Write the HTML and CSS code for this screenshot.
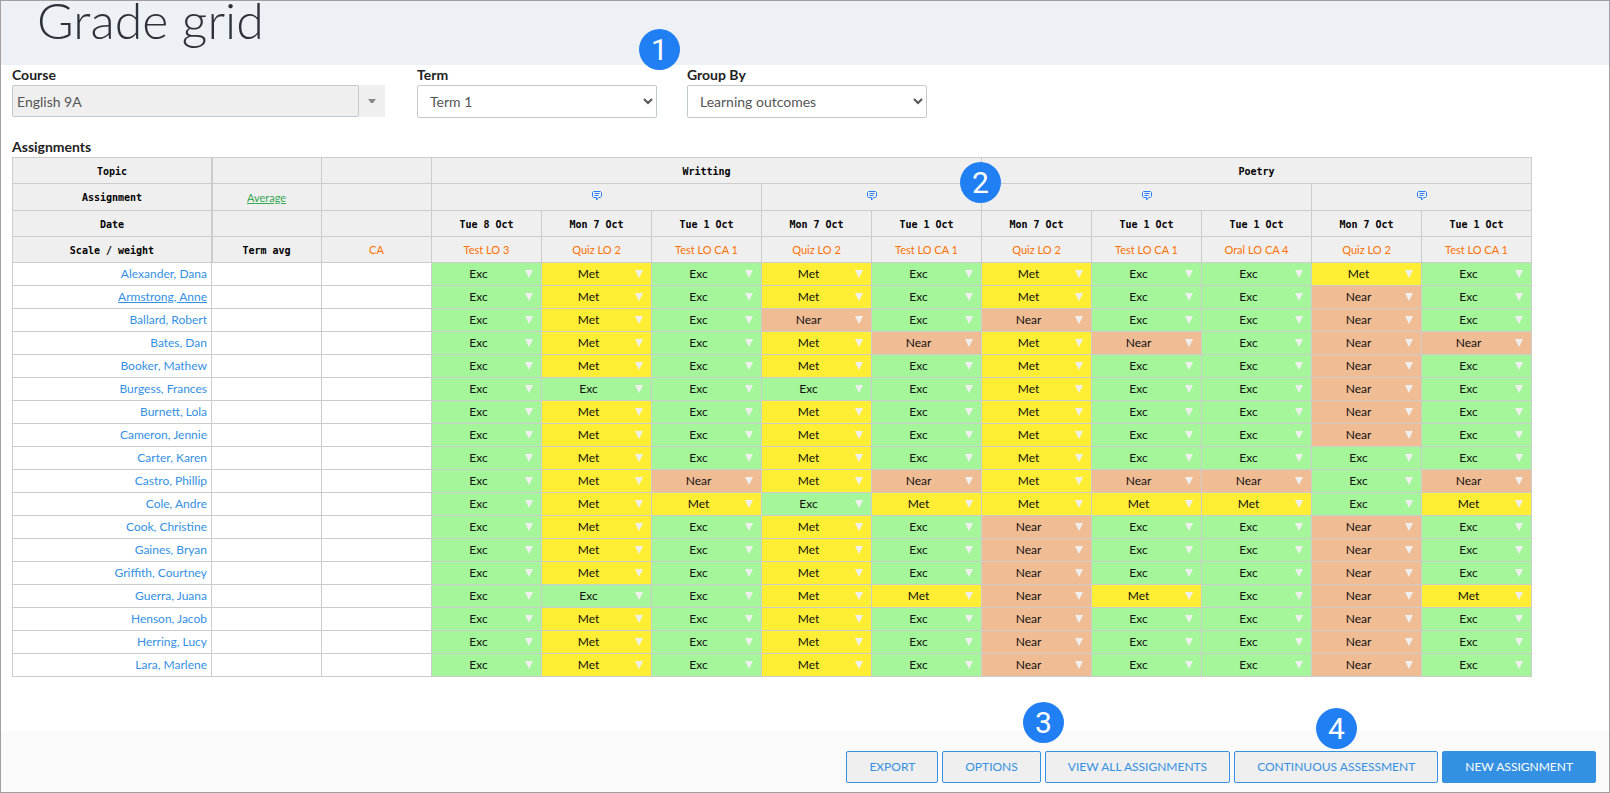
FILE: index.html
```html
<!DOCTYPE html>
<html lang="en">
<head>
<meta charset="utf-8">
<title>Grade grid</title>
<link rel="stylesheet" href="styles.css">
</head>
<body>
<svg class="sprite" aria-hidden="true">
  <symbol id="note" viewBox="0 0 10 10">
    <path d="M1.5 .5h7l1 1v4l-1 1H6.7L4.5 9V6.5h-3l-1-1v-4z" fill="none" stroke="currentColor"/>
    <path d="M2.5 2.5h5M2.5 4.5h4" stroke="currentColor"/>
  </symbol>
</svg>
<header class="page-head"><h1>Grade grid</h1></header>
<main class="content">
  <form class="filters">
    <div class="field field-course">
      <label for="course">Course</label>
      <div class="combo">
        <input id="course" type="text" value="English 9A" readonly>
        <button type="button" aria-label="Choose course"><svg viewBox="0 0 8 5"><path d="M0 0h8L5 4H3z"/></svg></button>
      </div>
    </div>
    <div class="field">
      <label for="term">Term</label>
      <select id="term"><option>Term 1</option><option>Term 2</option></select>
    </div>
    <div class="field">
      <label for="group">Group By</label>
      <select id="group"><option>Learning outcomes</option><option>Topics</option></select>
    </div>
  </form>
  <h2>Assignments</h2>
  <table class="grid">
    <colgroup><col class="col-name"><col span="12"></colgroup>
    <thead>
      <tr><th>Topic</th><th class="edge"></th><th></th><th colspan="5">Writting</th><th colspan="5">Poetry</th></tr>
      <tr class="notes"><th>Assignment</th><th class="edge"><a class="average" href="#average">Average</a></th><th></th>
        <th colspan="3"><a class="note" href="#note" aria-label="Note"><svg><use href="#note"/></svg></a></th>
        <th colspan="2"><a class="note" href="#note" aria-label="Note"><svg><use href="#note"/></svg></a></th>
        <th colspan="3"><a class="note" href="#note" aria-label="Note"><svg><use href="#note"/></svg></a></th>
        <th colspan="2"><a class="note" href="#note" aria-label="Note"><svg><use href="#note"/></svg></a></th></tr>
      <tr><th>Date</th><th class="edge"></th><th></th><th>Tue 8 Oct</th><th>Mon 7 Oct</th><th>Tue 1 Oct</th><th>Mon 7 Oct</th><th>Tue 1 Oct</th><th>Mon 7 Oct</th><th>Tue 1 Oct</th><th>Tue 1 Oct</th><th>Mon 7 Oct</th><th>Tue 1 Oct</th></tr>
      <tr class="scales"><th class="plain">Scale / weight</th><th class="edge plain">Term avg</th><th>CA</th><th>Test LO 3</th><th>Quiz LO 2</th><th>Test LO CA 1</th><th>Quiz LO 2</th><th>Test LO CA 1</th><th>Quiz LO 2</th><th>Test LO CA 1</th><th>Oral LO CA 4</th><th>Quiz LO 2</th><th>Test LO CA 1</th></tr>
    </thead>
    <tbody id="students"></tbody>
  </table>
</main>
<footer class="actions">
  <button type="button">EXPORT</button>
  <button type="button">OPTIONS</button>
  <button type="button">VIEW ALL ASSIGNMENTS</button>
  <button type="button">CONTINUOUS ASSESSMENT</button>
  <button type="button" class="primary">NEW ASSIGNMENT</button>
  <span class="marker marker-3">3</span>
  <span class="marker marker-4">4</span>
</footer>
<span class="marker marker-1">1</span>
<span class="marker marker-2">2</span>
<script src="grid.js"></script>
</body>
</html>
```
FILE: styles.css
```css
* { box-sizing: border-box; }

body {
  margin: 0;
  min-height: 100vh;
  display: flex;
  flex-direction: column;
  position: relative;
  border: 1px solid #a0a0a0;
  background: #fff;
  color: #222;
  font-family: Lato, sans-serif;
  font-size: 14px;
}

.sprite { position: absolute; width: 0; height: 0; }

.page-head {
  height: 64px;
  padding-left: 36px;
  background: #edf1f5;
}

.page-head h1 {
  margin: 0;
  color: #2d3139;
  font-size: 50px;
  font-weight: 300;
  line-height: 38px;
}

.content { flex: 1; padding: 0 77px 54px 11px; }

.filters { display: flex; align-items: flex-start; gap: 30px; margin-bottom: 19px; }
.field { display: flex; flex-direction: column; width: 240px; }
.field-course { width: 373px; margin-right: 2px; }

.field label, .content h2 {
  margin: 0;
  color: #222;
  font-size: 14px;
  font-weight: 700;
  line-height: 20px;
}

.field select, .combo input {
  font: 14px Lato, sans-serif;
  color: #555;
  border: 1px solid #c2cad1;
  border-radius: 2px;
}

.field select { height: 33px; padding: 0 0 0 8px; background: #fff; }
.combo { display: flex; height: 32px; }
.combo input { flex: 1; min-width: 0; padding: 0 4px; background: #efefef; }
.combo button { width: 26px; padding: 0; border: 0; background: #efefef; }
.combo svg { display: block; width: 8px; height: 5px; margin: 0 auto; fill: #888; }

.grid {
  width: 100%;
  table-layout: fixed;
  border-collapse: collapse;
  font-size: 12px;
}

.col-name { width: 199px; }
.grid th, .grid td { height: 23px; padding: 0; border: 1px solid #ccc; }

.grid thead th {
  height: 26px;
  padding-top: 2px;
  background: #efefef;
  color: #000;
  font: bold 10px "DejaVu Sans Mono", monospace;
  text-align: center;
}

.grid .notes th { height: 27px; padding-top: 0; }
.grid thead .edge { box-shadow: inset 1px 0 #ccc; }
.grid .scales th:not(.plain) { padding-top: 0; color: #ff6f00; font: 11px Lato, sans-serif; }
.grid .average { color: #34a853; font: 11px Lato, sans-serif; }
.note { display: block; height: 10px; margin-bottom: 2px; color: #2a7fff; }
.note svg { display: block; width: 10px; height: 10px; margin: 0 auto; }

.grid tbody th { padding: 0 4px 2px 0; font-weight: 400; line-height: 15px; text-align: right; }
.grid tbody a { color: #3490e2; text-decoration: none; }
.grid tbody a:hover, .grid tbody a.current { text-decoration: underline; }

.grid tbody select {
  display: block;
  width: 100%;
  height: 22px;
  padding: 0 16px 2px 0;
  appearance: none;
  border: 0;
  border-radius: 0;
  background: url("data:image/svg+xml,%3Csvg xmlns='http://www.w3.org/2000/svg' width='8' height='8'%3E%3Cpath d='M0 0h8L4 8z' fill='%23efefef'/%3E%3C/svg%3E") no-repeat right 8px top 7px;
  color: #111;
  font: 12px Lato, sans-serif;
  text-align: center;
  text-align-last: center;
}

.exc { background: #a5f59b; }
.met { background: #ffee33; }
.near { background: #f0bc94; }

.actions {
  position: relative;
  display: flex;
  justify-content: flex-end;
  gap: 4px;
  padding: 20px 13px 9px;
  background: #fafafa;
}

.actions button {
  height: 32px;
  padding: 0 22px 2px;
  border: 1px solid #3490e2;
  border-radius: 2px;
  background: #efefef;
  color: #3490e2;
  font: 12px Lato, sans-serif;
}

.actions .primary { background: #3490e2; color: #fff; }

.marker {
  position: absolute;
  width: 41px;
  height: 41px;
  border-radius: 50%;
  background: #207ff3;
  color: #fff;
  font: 30px/41px Roboto, sans-serif;
  text-align: center;
}

.marker-1 { left: 638px; top: 28px; }
.marker-2 { left: 959px; top: 161px; }
.marker-3 { right: 545px; top: -29px; }
.marker-4 { right: 252px; top: -23px; }
```
FILE: grid.js
```js
const grades = { E: "Exc", M: "Met", N: "Near" };

const students = [
  ["Alexander, Dana", "EMEMEMEEME"],
  ["Armstrong, Anne", "EMEMEMEENE"],
  ["Ballard, Robert", "EMENENEENE"],
  ["Bates, Dan", "EMEMNMNENN"],
  ["Booker, Mathew", "EMEMEMEENE"],
  ["Burgess, Frances", "EEEEEMEENE"],
  ["Burnett, Lola", "EMEMEMEENE"],
  ["Cameron, Jennie", "EMEMEMEENE"],
  ["Carter, Karen", "EMEMEMEEEE"],
  ["Castro, Phillip", "EMNMNMNNEN"],
  ["Cole, Andre", "EMMEMMMMEM"],
  ["Cook, Christine", "EMEMENEENE"],
  ["Gaines, Bryan", "EMEMENEENE"],
  ["Griffith, Courtney", "EMEMENEENE"],
  ["Guerra, Juana", "EEEMMNMENM"],
  ["Henson, Jacob", "EMEMENEENE"],
  ["Herring, Lucy", "EMEMENEENE"],
  ["Lara, Marlene", "EMEMENEENE"]
];

function gradeCell(name, mark, index) {
  const options = Object.entries(grades)
    .map(([key, label]) => `<option${key === mark ? " selected" : ""}>${label}</option>`)
    .join("");
  return `<td class="${grades[mark].toLowerCase()}"><select aria-label="${name}, grade ${index + 1}">${options}</select></td>`;
}

const body = document.getElementById("students");
body.innerHTML = students.map(([name, marks]) => {
  const current = name === "Armstrong, Anne" ? ' class="current"' : "";
  const cells = [...marks].map((mark, i) => gradeCell(name, mark, i)).join("");
  return `<tr><th scope="row"><a href="#student"${current}>${name}</a></th><td></td><td></td>${cells}</tr>`;
}).join("");

body.addEventListener("change", (event) => {
  event.target.parentElement.className = event.target.value.toLowerCase();
});
```
